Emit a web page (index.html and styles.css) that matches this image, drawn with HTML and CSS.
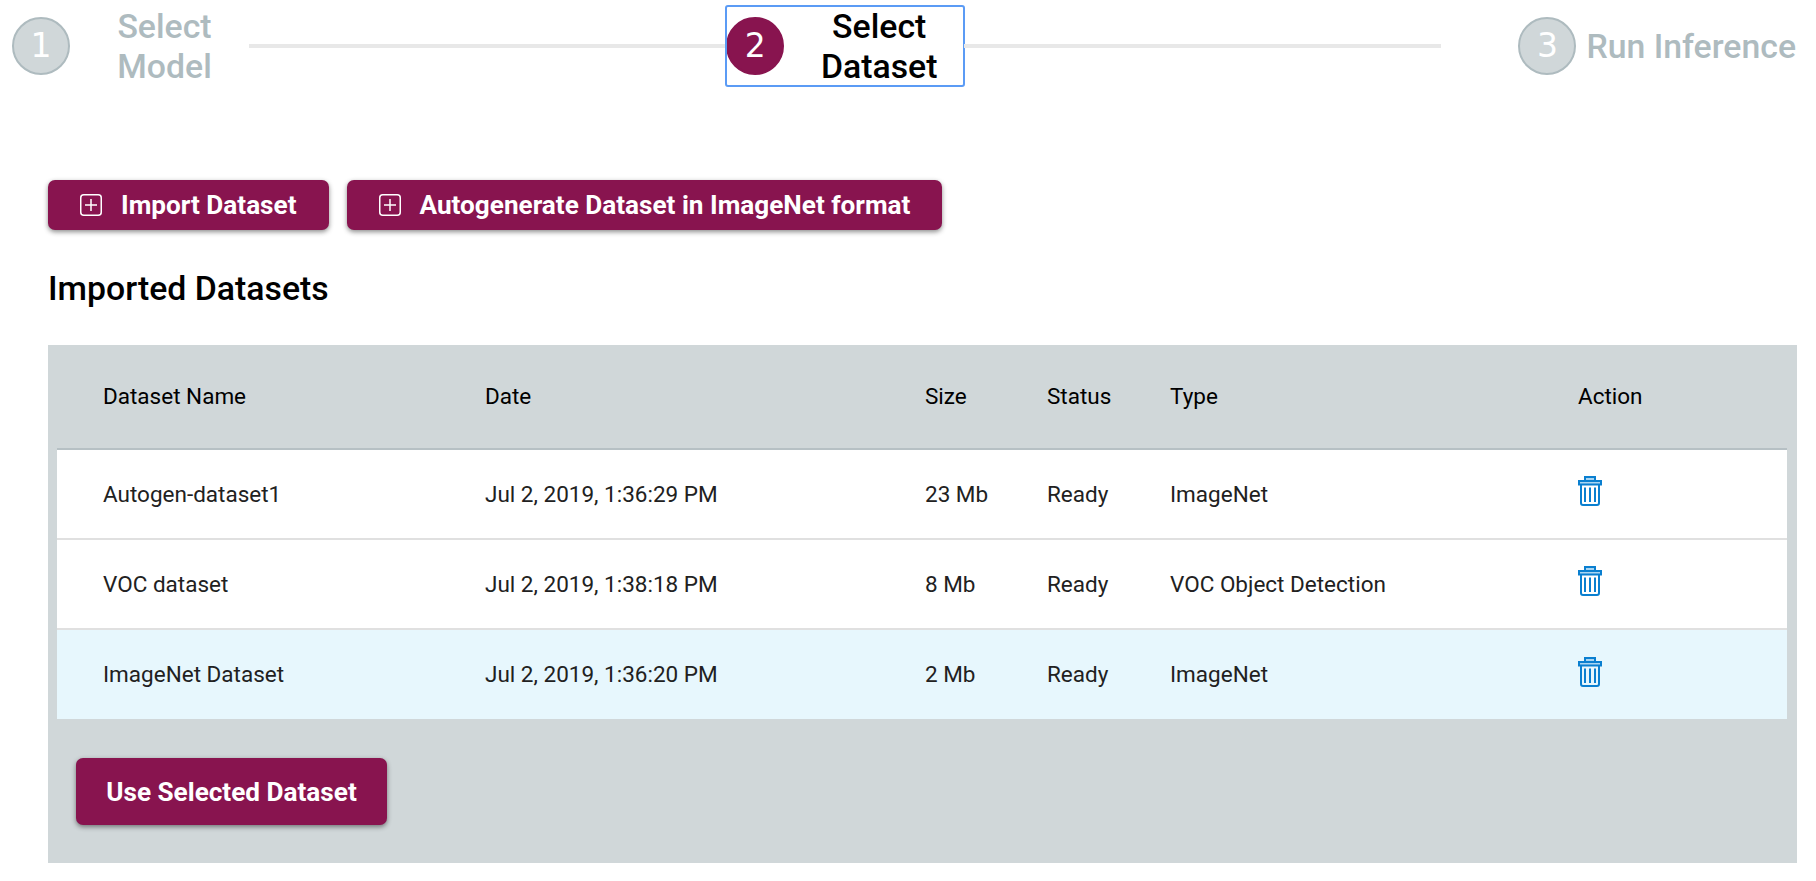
FILE: index.html
```html
<!DOCTYPE html>
<html lang="en">
<head>
    <meta charset="UTF-8">
    <meta name="viewport" content="width=device-width, initial-scale=1.0">
    <title>Select Dataset</title>
    <link rel="stylesheet" href="styles.css">
</head>
<body>
    <!-- icons used more than once -->
    <svg class="icon-defs">
        <symbol id="icon-plus" viewBox="0 0 22 22">
            <rect x="0.75" y="0.75" width="20.5" height="20.5" rx="3"/>
            <path d="M11 5v12M5 11h12"/>
        </symbol>
        <symbol id="icon-trash" viewBox="0 0 24 30">
            <path class="trash-light" d="M7 5V1h10v4z"/>
            <path class="trash-light" d="M1 5h22v3.500H1z"/>
            <path d="M3 8.500V27a2 2 0 0 0 2 2h14a2 2 0 0 0 2-2V8.500"/>
            <path d="M7 11.500V26M12 11.500V26M17 11.500V26"/>
        </symbol>
    </svg>

    <div class="stepper">
        <div class="step step-first">
            <span class="step-num">1</span>
            <span class="step-label">Select<br>Model</span>
        </div>
        <div class="step-line"></div>
        <div class="step step-active">
            <span class="step-num">2</span>
            <span class="step-label">Select<br>Dataset</span>
        </div>
        <div class="step-line"></div>
        <div class="step step-last">
            <span class="step-num">3</span>
            <span class="step-label">Run Inference</span>
        </div>
    </div>

    <div class="content">
        <div class="actions">
            <button class="btn btn-add">
                <svg class="plus-icon"><use href="#icon-plus"/></svg>
                Import Dataset
            </button>
            <button class="btn btn-add">
                <svg class="plus-icon"><use href="#icon-plus"/></svg>
                Autogenerate Dataset in ImageNet format
            </button>
        </div>

        <h2 class="title">Imported Datasets</h2>

        <div class="panel">
            <table class="datasets">
                <colgroup>
                    <col class="col-name">
                    <col class="col-date">
                    <col class="col-size">
                    <col class="col-status">
                    <col class="col-type">
                    <col>
                </colgroup>
                <thead>
                    <tr>
                        <th>Dataset Name</th>
                        <th>Date</th>
                        <th>Size</th>
                        <th>Status</th>
                        <th>Type</th>
                        <th>Action</th>
                    </tr>
                </thead>
                <tbody>
                    <tr>
                        <td>Autogen-dataset1</td>
                        <td>Jul 2, 2019, 1:36:29 PM</td>
                        <td>23 Mb</td>
                        <td>Ready</td>
                        <td>ImageNet</td>
                        <td><svg class="trash-icon"><use href="#icon-trash"/></svg></td>
                    </tr>
                    <tr>
                        <td>VOC dataset</td>
                        <td>Jul 2, 2019, 1:38:18 PM</td>
                        <td>8 Mb</td>
                        <td>Ready</td>
                        <td>VOC Object Detection</td>
                        <td><svg class="trash-icon"><use href="#icon-trash"/></svg></td>
                    </tr>
                    <tr class="selected">
                        <td>ImageNet Dataset</td>
                        <td>Jul 2, 2019, 1:36:20 PM</td>
                        <td>2 Mb</td>
                        <td>Ready</td>
                        <td>ImageNet</td>
                        <td><svg class="trash-icon"><use href="#icon-trash"/></svg></td>
                    </tr>
                </tbody>
            </table>
            <button class="btn btn-use">Use Selected Dataset</button>
        </div>
    </div>
</body>
</html>
```

FILE: styles.css
```css
* {
    box-sizing: border-box;
}

body {
    margin: 0;
    font-family: Roboto, "Liberation Sans", sans-serif;
    color: #000;
    background-color: #fff;
}

.icon-defs {
    display: none;
}

.stepper {
    display: flex;
    align-items: center;
    padding: 5px 20px 0 12px;
}

.step {
    display: flex;
    align-items: center;
    height: 82px;
    font-size: 33.800px;
    font-weight: 500;
    line-height: 40px;
    color: #aebbbf;
}

.step-first {
    width: 237px;
}

.step-active {
    width: 238px;
    height: 80px;
    color: #000;
    outline: 2px solid #5b9bf5;
    outline-offset: -1px;
    border-radius: 2px;
}

.step-last {
    margin-left: 77px;
}

.step-num {
    flex: none;
    width: 58px;
    height: 58px;
    display: flex;
    align-items: center;
    justify-content: center;
    border: 2px solid #aebbbf;
    border-radius: 50%;
    background-color: #d0d7d9;
    color: #fff;
    font-family: "DejaVu Sans", sans-serif;
    font-size: 33px;
    font-weight: 400;
}

.step-active .step-num {
    background-color: #88144f;
    border-color: #88144f;
}

.step-label {
    flex: 1;
    padding: 2px 0 0 10px;
    text-align: center;
}

.step-last .step-label {
    white-space: nowrap;
}

.step-line {
    flex: 1;
    height: 4px;
    background-color: #e8e8e8;
}

.content {
    padding: 93px 19px 19px 48px;
}

.actions {
    display: flex;
    gap: 18px;
}

.btn {
    border: none;
    border-radius: 7px;
    background-color: #88144f;
    color: #fff;
    font-family: inherit;
    font-size: 26.150px;
    font-weight: 700;
    box-shadow: 0 2px 5px rgba(0, 0, 0, 0.45);
}

.btn-add {
    display: flex;
    align-items: center;
    gap: 19px;
    height: 50px;
    padding: 0 32px;
}

.plus-icon {
    width: 22px;
    height: 22px;
    fill: none;
    stroke: #fff;
    stroke-width: 1.500;
}

.title {
    margin: 39px 0 36px;
    font-size: 33.800px;
    font-weight: 500;
    line-height: 40px;
}

.panel {
    padding-bottom: 38px;
    background-color: #d0d7d9;
}

.datasets {
    width: 1730px;
    margin-left: 9px;
    border-collapse: collapse;
    table-layout: fixed;
    font-size: 22.500px;
}

.col-name {
    width: 428px;
}

.col-date {
    width: 440px;
}

.col-size {
    width: 122px;
}

.col-status {
    width: 123px;
}

.col-type {
    width: 408px;
}

.datasets th,
.datasets td {
    padding: 0 0 1px;
    text-align: left;
    font-weight: 400;
}

.datasets th:first-child,
.datasets td:first-child {
    padding-left: 46px;
}

.datasets th {
    height: 104px;
    border-bottom: 2px solid #b6c0c4;
}

.datasets td {
    height: 90px;
    border-bottom: 2px solid #e0e0e0;
    background-color: #fff;
    color: #212121;
}

.datasets tr:last-child td {
    border-bottom: none;
}

.datasets .selected td {
    background-color: #e7f7fd;
}

.trash-icon {
    display: block;
    width: 24px;
    height: 30px;
    margin-top: -5px;
    fill: none;
    stroke: #0a7fd0;
    stroke-width: 2;
}

.trash-light {
    fill: #a9d5f2;
}

.btn-use {
    display: block;
    width: 311px;
    height: 67px;
    margin: 39px 0 0 28px;
}
```
